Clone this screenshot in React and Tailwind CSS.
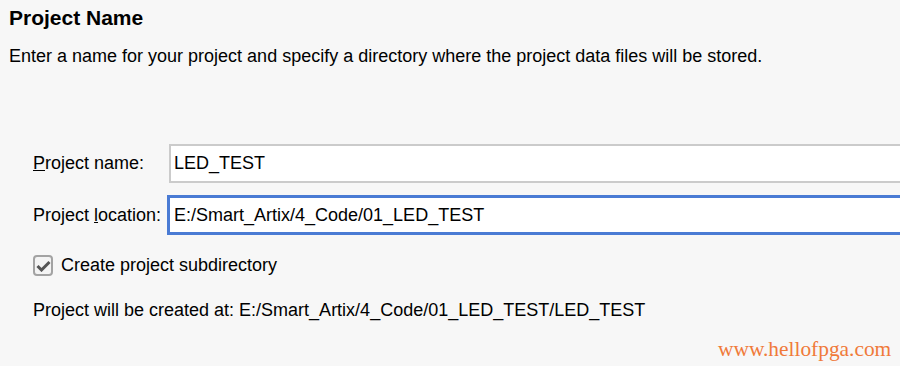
export default function App() {
  return (
    <div className="w-[900px] h-[366px] bg-[#f7f7f7] overflow-hidden relative" style={{ fontFamily: '"Liberation Sans", Arial, sans-serif' }}>
      <div className="pl-[9px] pt-[6px]">
        <div className="text-[21px] font-bold leading-[24px] text-black">Project Name</div>
        <div className="mt-[15px] text-[18px] leading-[22px] text-black">
          Enter a name for your project and specify a directory where the project data files will be stored.
        </div>
      </div>
      <div className="pl-[33px] mt-[77px]">
        <div className="flex items-center h-[39px]">
          <div className="w-[136px] text-[18px] text-black"><span className="underline">P</span>roject name:</div>
          <div className="flex-1 h-[39px] bg-white border-2 border-[#cbcbcb] border-r-0 flex items-center pl-[3px] text-[18px] text-black">
            LED_TEST
          </div>
        </div>
        <div className="flex items-center h-[40px] mt-[12px]">
          <div className="w-[134px] text-[18px] text-black">Project <span className="underline">l</span>ocation:</div>
          <div className="flex-1 h-[40px] bg-white border-[3px] border-[#4a7bd4] border-r-0 flex items-center pl-[4px] text-[18px] text-black">
            E:/Smart_Artix/4_Code/01_LED_TEST
          </div>
        </div>
        <div className="flex items-center mt-[20px] h-[21px]">
          <div className="w-[20px] h-[21px] rounded-[4px] border-2 border-[#a3a3a3] bg-[#f4f4f4] flex items-center justify-center">
            <svg width="15" height="12" viewBox="0 0 15 12">
              <path d="M1.5 6 L5.5 10 L13.5 2" fill="none" stroke="#555" strokeWidth="3" />
            </svg>
          </div>
          <div className="ml-[8px] text-[18px] text-black">Create project subdirectory</div>
        </div>
        <div className="mt-[23px] text-[18px] leading-[22px] text-black">
          Project will be created at: E:/Smart_Artix/4_Code/01_LED_TEST/LED_TEST
        </div>
      </div>
      <div className="absolute left-[718px] top-[337px] text-[21.4px] leading-[24px] text-[#f07a3a]" style={{ fontFamily: '"Liberation Serif", "Times New Roman", serif' }}>
        www.hellofpga.com
      </div>
    </div>
  );
}
